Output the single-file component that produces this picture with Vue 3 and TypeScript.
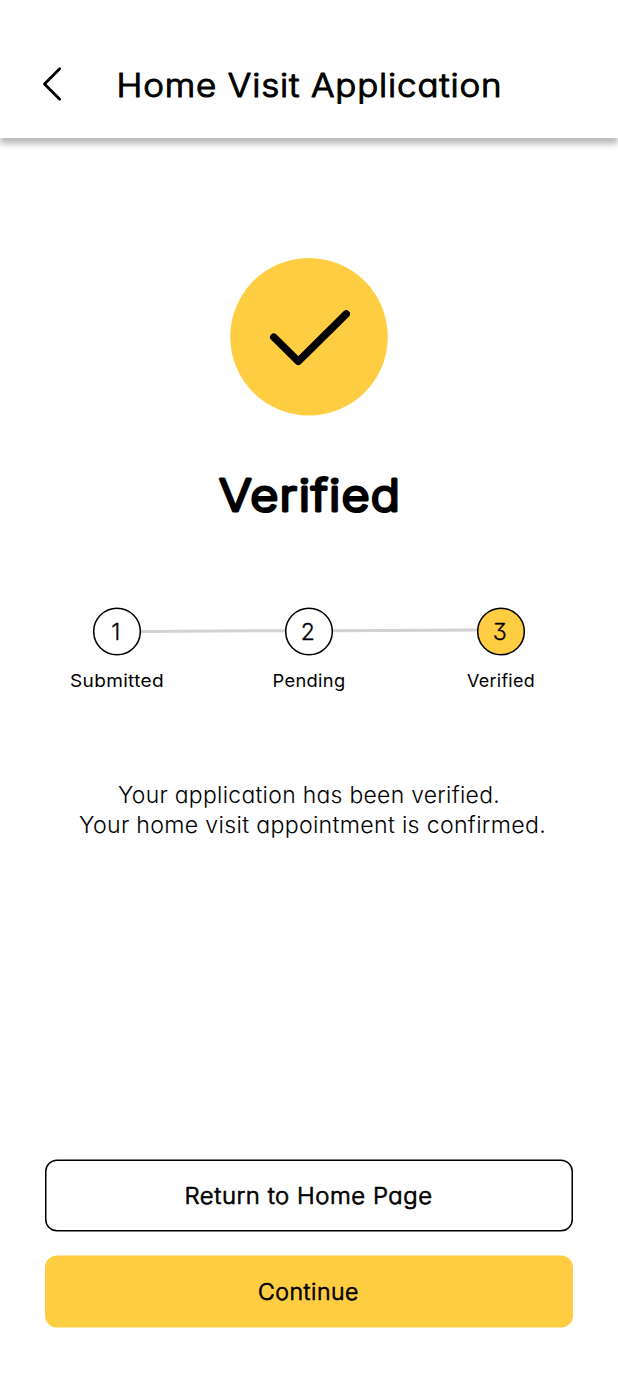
<script setup lang="ts">
interface Step {
  number: string
  label: string
  labelWidth: number
  active: boolean
}

interface Line {
  text: string
  start: number
  width: number
}

interface Action extends Line {
  filled: boolean
}

const steps: Step[] = [
  { number: '1', label: 'Submitted', labelWidth: 94, active: false },
  { number: '2', label: 'Pending', labelWidth: 73, active: false },
  { number: '3', label: 'Verified', labelWidth: 68, active: true },
]

const message: Line[] = [
  { text: 'Your application has been verified.', start: 118, width: 382 },
  { text: 'Your home visit appointment is confirmed.', start: 79, width: 467 },
]

const actions: Action[] = [
  { text: 'Return to Home Page', start: 139.5, width: 248, filled: false },
  { text: 'Continue', start: 213, width: 101, filled: true },
]
</script>

<template>
  <div class="screen">
    <header class="header">
      <button class="back" aria-label="Back">
        <svg width="20" height="36" viewBox="0 0 20 36">
          <path d="M17.7 2.7 2.5 18l15.2 15.3" />
        </svg>
      </button>
      <h1 class="title">
        <svg width="400" height="50">
          <text x="0.5" y="37" textLength="386" lengthAdjust="spacingAndGlyphs" class="round title-text">Home Visit Application</text>
        </svg>
      </h1>
    </header>

    <main class="content">
      <svg class="badge" width="158" height="158" viewBox="0 0 158 158">
        <circle cx="79" cy="78.8" r="78.8" />
        <path d="M43.8 79.2 68.3 103.3 116.2 56" />
      </svg>

      <h2 class="status">
        <svg width="190" height="60">
          <text x="5" y="46.5" textLength="182" lengthAdjust="spacingAndGlyphs" class="round status-text">Verified</text>
        </svg>
      </h2>

      <section class="stepper">
        <div class="track">
          <template v-for="(step, i) in steps" :key="step.label">
            <svg v-if="i > 0" class="connector" width="144" height="49">
              <line x1="0" :y1="i === 1 ? 24.5 : 23.7" x2="144" :y2="i === 1 ? 23.7 : 22.9" :class="{ cool: i === 1 }" />
            </svg>
            <svg class="dot" :class="{ active: step.active }" width="48" height="49">
              <circle cx="24" cy="24.5" r="23.3" />
              <text x="22.7" y="33" text-anchor="middle" class="round digit">{{ step.number }}</text>
            </svg>
          </template>
        </div>
        <div class="labels">
          <svg v-for="step in steps" :key="step.label" width="192" height="30">
            <text
              :x="96 - step.labelWidth / 2"
              y="20"
              :textLength="step.labelWidth"
              lengthAdjust="spacingAndGlyphs"
              class="label"
            >{{ step.label }}</text>
          </svg>
        </div>
      </section>

      <p class="message">
        <svg v-for="line in message" :key="line.text" width="618" height="30">
          <text
            :x="line.start"
            y="23.5"
            :textLength="line.width"
            lengthAdjust="spacingAndGlyphs"
            class="round message-text"
          >{{ line.text }}</text>
        </svg>
      </p>
    </main>

    <footer class="actions">
      <button v-for="action in actions" :key="action.text" class="action" :class="{ filled: action.filled }">
        <svg width="528" height="73">
          <rect v-if="action.filled" x="0" y="0.5" width="528" height="72" rx="12" />
          <rect v-else x="0.75" y="1.25" width="526.5" height="70.5" rx="11.25" />
          <text
            :x="action.start"
            y="45.3"
            :textLength="action.width"
            lengthAdjust="spacingAndGlyphs"
            class="round action-text"
          >{{ action.text }}</text>
        </svg>
      </button>
    </footer>
  </div>
</template>

<style>
body {
  background: #fff;
}
</style>

<style scoped>
.screen {
  width: 618px;
  height: 1376px;
  display: flex;
  flex-direction: column;
  overflow: hidden;
  background: #fff;
  color: #000;
  font-family: Inter, 'Noto Sans', sans-serif;
}

svg {
  display: block;
  flex: none;
}

h1,
h2,
p {
  margin: 0;
}

button {
  border: 0;
  padding: 0;
  background: none;
  color: inherit;
  font: inherit;
}

.header {
  height: 138px;
  flex: none;
  display: flex;
  box-sizing: border-box;
  padding: 60px 0 0 42px;
  gap: 54px;
  box-shadow: 0 6px 6px rgba(0, 0, 0, 0.27);
}

.back {
  height: 36px;
  margin-top: 6px;
}

.back path {
  fill: none;
  stroke: #000;
  stroke-width: 2.8;
  stroke-linecap: round;
  stroke-linejoin: round;
}

.content {
  flex: 1;
  display: flex;
  flex-direction: column;
  align-items: center;
  padding-top: 120px;
}

.badge circle {
  fill: #ffcd42;
}

.badge path {
  fill: none;
  stroke: #000;
  stroke-width: 7.5;
  stroke-linecap: round;
  stroke-linejoin: round;
}

.round {
  fill: #000;
  stroke: #000;
  stroke-linejoin: round;
  font-feature-settings: 'cv11', 'cv09';
}

.title-text {
  font-size: 33px;
  font-weight: 300;
  letter-spacing: 0.8px;
  stroke-width: 1.1px;
}

.status {
  margin-top: 48px;
}

.status-text {
  font-size: 44px;
  font-weight: 300;
  letter-spacing: 1px;
  stroke-width: 2.8px;
}

.stepper {
  margin-top: 83px;
}

.track {
  display: flex;
  justify-content: center;
}

.connector line {
  stroke: #d1d1d2;
  stroke-width: 3;
}

.connector line.cool {
  stroke: #d1d1d6;
}

.dot circle {
  fill: #fff;
  stroke: #000;
  stroke-width: 1.5;
}

.dot.active circle {
  fill: #ffcd42;
}

.digit {
  font-size: 23px;
  font-weight: 300;
  stroke-width: 0.3px;
}

.labels {
  display: grid;
  grid-template-columns: repeat(3, 192px);
  margin-top: 11px;
}

.label {
  font-size: 17.5px;
  font-weight: 400;
  letter-spacing: 0.3px;
  font-feature-settings: 'cv11';
}

.message {
  margin-top: 82px;
}

.message-text {
  font-size: 23px;
  font-weight: 300;
  letter-spacing: 0.3px;
  stroke-width: 0;
}

.actions {
  flex: none;
  display: flex;
  flex-direction: column;
  gap: 23px;
  padding: 0 45px 48px;
}

.action {
  height: 73px;
}

.action rect {
  fill: #fff;
  stroke: #000;
  stroke-width: 1.5;
}

.action.filled rect {
  fill: #ffcd42;
  stroke: none;
}

.action-text {
  font-size: 22.5px;
  font-weight: 300;
  letter-spacing: 0.5px;
  stroke-width: 0.7px;
}
</style>
